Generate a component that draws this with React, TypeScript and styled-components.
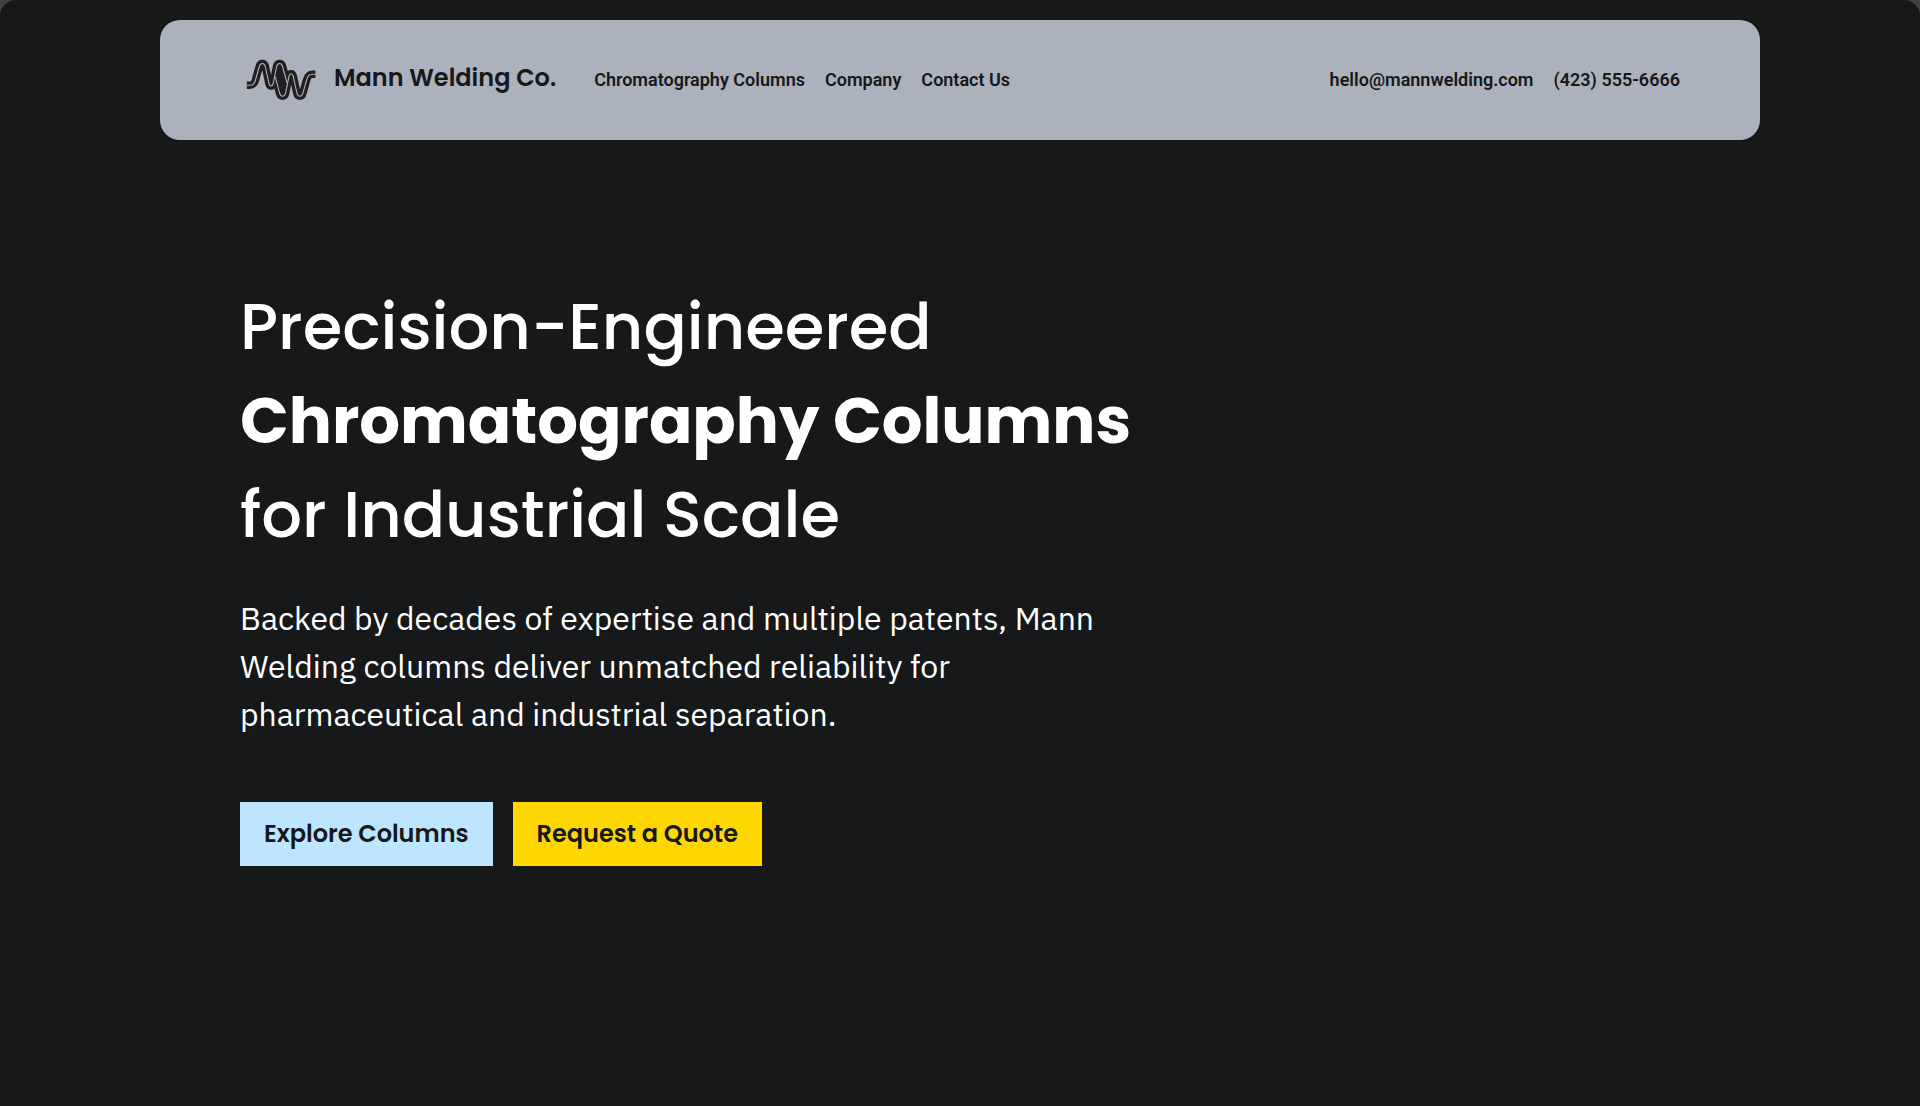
import React from "react";
import styled, { createGlobalStyle } from "styled-components";

const ink = "#161819";
const panel = "#abb1bd";
const display = `Poppins, Inter, "Open Sans", sans-serif`;

const GlobalStyle = createGlobalStyle`
  *, *::before, *::after { box-sizing: border-box; }
  html { background: #404142; }
  body { margin: 0; font-family: Roboto, sans-serif; }
`;

const Page = styled.div`
  min-height: 100vh;
  padding: 20px 160px;
  background: ${ink};
  border-radius: 16px 16px 0 0;
`;

const Header = styled.header`
  display: flex;
  align-items: center;
  justify-content: space-between;
  height: 120px;
  padding: 0 80px;
  border-radius: 20px;
  background: ${panel};
`;

const HeaderGroup = styled.div`
  display: flex;
  align-items: center;
  gap: 38px;
`;

const Brand = styled.a`
  display: flex;
  align-items: center;
  gap: 14px;
  color: ${ink};
  font: 600 24px/32px ${display};
  text-decoration: none;
  white-space: nowrap;
`;

const BrandName = styled.span`
  padding-bottom: 4px;
`;

const Logo = styled.svg`
  display: block;
  width: 80px;
  height: 60px;
`;

const LinkRow = styled.nav`
  display: flex;
  gap: 20px;
`;

const TextLink = styled.a`
  color: ${ink};
  font: 600 18px/24px Roboto, sans-serif;
  text-decoration: none;
  white-space: nowrap;
`;

const Hero = styled.main`
  padding: 140px 80px 0;
`;

const Title = styled.h1`
  margin: 0;
  color: #fff;
  font: 500 64px/94px ${display};
`;

const TitleLine = styled.span<{ $strong?: boolean }>`
  display: block;
  font-weight: ${(p) => (p.$strong ? 700 : 500)};
`;

const Lead = styled.p`
  max-width: 880px;
  margin: 32px 0 0;
  color: #fff;
  font: 400 32px/48px "IBM Plex Sans", "Noto Sans", sans-serif;
`;

const Actions = styled.div`
  display: flex;
  gap: 20px;
  margin-top: 64px;
`;

const Action = styled.button<{ $fill: string }>`
  height: 64px;
  padding: 0 24px;
  border: 0;
  background: ${(p) => p.$fill};
  color: ${ink};
  font: 600 24px/32px ${display};
  white-space: nowrap;
  cursor: pointer;
`;

/* The W is the M turned half a circle about the centre of the mark. */
const wave =
  "M6.800 35.300 H9.500 C13.500 35.300 14.500 33.500 15.600 29.500 L19.300 16.500 C20.300 12.400 24.300 12.400 25.300 16.500 L29 33.500 C29.800 36.700 32.400 36.700 33.200 33.500 L36.600 16.500 C37.600 12.400 41.600 12.400 42.600 16.500 L47 33";
const halfTurn = "rotate(180 41.1 29.8)";

function BrandMark() {
  return (
    <Logo viewBox="0 0 80 60" fill="none" aria-hidden="true">
      <g stroke="#231f20" strokeWidth="7.600" strokeLinejoin="round">
        <path d={wave} />
        <path d={wave} transform={halfTurn} />
      </g>
      <path d="M39.600 17 L46 32 L42.600 43 L36 28 Z" fill="#231f20" />
      <g stroke={panel} strokeWidth="1.100">
        <path d={wave} />
        <path d={wave} transform={halfTurn} />
      </g>
    </Logo>
  );
}

export default function App() {
  return (
    <>
      <GlobalStyle />
      <Page>
        <Header>
          <HeaderGroup>
            <Brand href="#">
              <BrandMark />
              <BrandName>Mann Welding Co.</BrandName>
            </Brand>
            <LinkRow aria-label="Main">
              <TextLink href="#columns">Chromatography Columns</TextLink>
              <TextLink href="#company">Company</TextLink>
              <TextLink href="#contact">Contact Us</TextLink>
            </LinkRow>
          </HeaderGroup>
          <LinkRow aria-label="Contact">
            <TextLink href="mailto:hello@mannwelding.com">hello@mannwelding.com</TextLink>
            <TextLink href="tel:+14235556666">(423) 555-6666</TextLink>
          </LinkRow>
        </Header>
        <Hero>
          <Title>
            <TitleLine>Precision-Engineered</TitleLine>
            <TitleLine $strong>Chromatography Columns</TitleLine>
            <TitleLine>for Industrial Scale</TitleLine>
          </Title>
          <Lead>
            Backed by decades of expertise and multiple patents, Mann Welding columns deliver
            unmatched reliability for pharmaceutical and industrial separation.
          </Lead>
          <Actions>
            <Action type="button" $fill="#bde5ff">Explore Columns</Action>
            <Action type="button" $fill="#ffd700">Request a Quote</Action>
          </Actions>
        </Hero>
      </Page>
    </>
  );
}
